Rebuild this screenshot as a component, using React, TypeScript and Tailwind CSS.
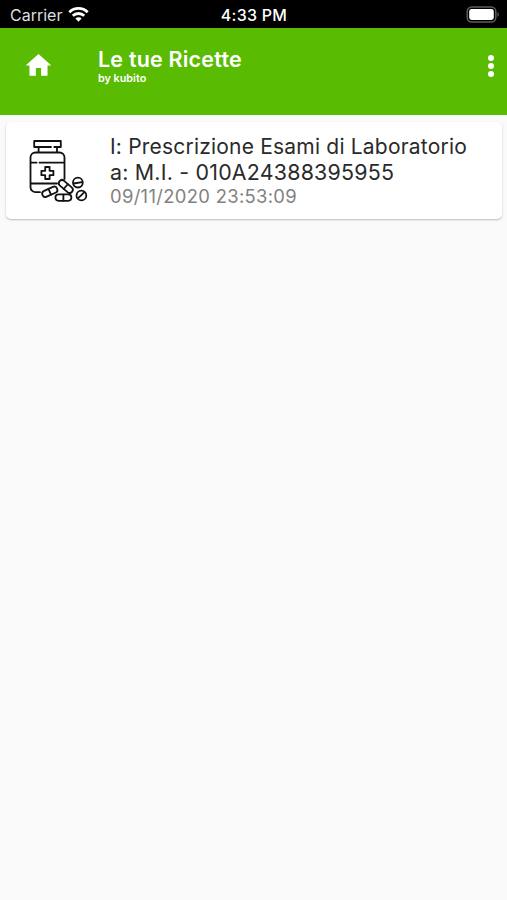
const recipes = [
  {
    title: "I: Prescrizione Esami di Laboratorio",
    recipient: "a: M.I. - 010A24388395955",
    date: "09/11/2020 23:53:09",
  },
];

function WifiIcon() {
  return (
    <svg className="ml-[6px] h-[15px] w-[21px]" viewBox="0 0 21 15" fill="none" stroke="white" strokeWidth="2.8">
      <path d="M1.3 5.2a13.2 13.2 0 0 1 18.4 0" />
      <path d="M4.8 8.8a8.2 8.2 0 0 1 11.4 0" />
      <path d="M10.5 14.7 7.4 11.6a4.4 4.4 0 0 1 6.2 0Z" fill="white" stroke="none" />
    </svg>
  );
}

function BatteryIcon() {
  return (
    <svg className="h-[17px] w-[34px]" viewBox="0 0 34 17">
      <rect x="1.2" y="1" width="28.6" height="15" rx="4.5" fill="none" stroke="#5c5c5c" strokeWidth="1.5" />
      <rect x="3.2" y="3" width="24.6" height="11" rx="2.4" fill="white" />
      <path d="M31.4 6.2c1.9.7 1.9 3.9 0 4.6Z" fill="#5c5c5c" />
    </svg>
  );
}

function HomeIcon() {
  return (
    <svg className="h-[31px] w-[31px]" viewBox="0 0 24 24" fill="white">
      <path d="M10 20v-6h4v6h5v-8h3L12 3 2 12h3v8z" />
    </svg>
  );
}

function MedicineIcon() {
  return (
    <svg
      className="h-[80px] w-[76px]"
      viewBox="0 0 76 80"
      fill="none"
      stroke="#111"
      strokeWidth="1.8"
      strokeLinecap="round"
      strokeLinejoin="round"
    >
      {/* Bottle */}
      <path d="M31 17H14.2v-6h26.6v6h-6.5M18.6 17.5v4.7M37 17.5v4.7" />
      <path d="M20 62.2h-4.5a5 5 0 0 1-5-5V27.5a5 5 0 0 1 5-5h24a5 5 0 0 1 5 5v21.5" />
      <path d="M11 32.7h5.5M19.5 32.7h24.5M11 53.5h26" />
      <path d="M25.2 37h4.4v3.8h3.8v4.4h-3.8V49h-4.4v-3.8h-3.8v-4.4h3.8Z" />
      {/* Pills */}
      <g transform="translate(29.8 61.8) rotate(-24)">
        <rect x="-8" y="-3.2" width="16" height="6.4" rx="3.2" />
        <path d="M0-3v6" />
      </g>
      <g transform="translate(45.8 56.5) rotate(41)">
        <rect x="-8.2" y="-3.2" width="16.4" height="6.4" rx="3.2" />
        <path d="M0-3v6" />
      </g>
      <rect x="35.4" y="64.4" width="16" height="6.4" rx="3.2" />
      <path d="M43.4 64.6v6" />
      <circle cx="57.9" cy="52.6" r="4.9" />
      <path d="M53.7 53.5l8.4-1.4" />
      <circle cx="61.4" cy="65.5" r="4.9" />
      <path d="M58.2 68.2l6-5.8" />
    </svg>
  );
}

function StatusBar() {
  return (
    <div className="grid h-7 grid-cols-3 items-center bg-black pr-[7px] pl-[10px] text-white">
      <div className="flex items-center">
        <span className="pt-[2px] text-[16px] leading-none text-[#dedede]">Carrier</span>
        <WifiIcon />
      </div>
      <span className="pr-[2px] pt-[2px] text-center text-[16px] leading-none font-medium tracking-[0.25px]">4:33 PM</span>
      <div className="flex justify-end">
        <BatteryIcon />
      </div>
    </div>
  );
}

export default function App() {
  return (
    <div className="min-h-screen bg-[#fafafa] font-['Inter',sans-serif]">
      <StatusBar />

      {/* App bar */}
      <header className="flex h-[87px] items-start bg-[#59bb02] pt-[18px] text-white">
        <button className="ml-[23px] pt-[4px]">
          <HomeIcon />
        </button>
        <div className="ml-[44px] flex-1">
          <h1 className="text-[21.5px] leading-[27px] font-semibold tracking-[0.2px] whitespace-nowrap">Le tue Ricette</h1>
          <p className="text-[10.8px] leading-[12px] font-semibold">by kubito</p>
        </div>
        <button className="mr-[13px] flex flex-col gap-[2px] pt-[9px]">
          <span className="h-[6px] w-[6px] rounded-full bg-white"></span>
          <span className="h-[6px] w-[6px] rounded-full bg-white"></span>
          <span className="h-[6px] w-[6px] rounded-full bg-white"></span>
        </button>
      </header>

      <main className="pt-[7px] pr-[5px] pl-[6px]">
        {recipes.map((recipe) => (
          <article
            key={recipe.date}
            className="flex h-[97px] rounded-[5px] bg-white shadow-[0_1px_2px_rgba(0,0,0,0.26)]"
          >
            <div className="ml-[14px] pt-[8px]">
              <MedicineIcon />
            </div>
            <div className="ml-[14px] pt-[12px] whitespace-nowrap">
              <h2 className="text-[21px] leading-[26px] tracking-[0.2px] text-[#2a2a2a]">{recipe.title}</h2>
              <p className="text-[21.4px] leading-[25px] tracking-[0.21px] text-[#2a2a2a]">{recipe.recipient}</p>
              <p className="text-[18.4px] leading-[22px] tracking-[0.33px] text-[#828282]">{recipe.date}</p>
            </div>
          </article>
        ))}
      </main>
    </div>
  );
}
